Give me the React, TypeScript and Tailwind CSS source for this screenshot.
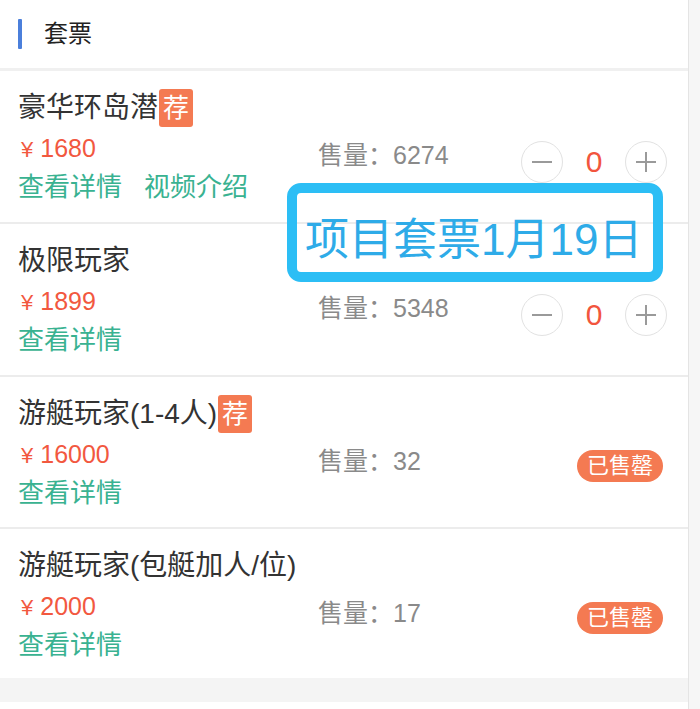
import { useState } from 'react';

type Ticket = {
  name: string;
  hot: boolean;
  price: string;
  sold: number;
  video: boolean;
  soldOut: boolean;
  height: string;
};

const tickets: Ticket[] = [
  { name: '豪华环岛潜', hot: true, price: '1680', sold: 6274, video: true, soldOut: false, height: 'h-[151px]' },
  { name: '极限玩家', hot: false, price: '1899', sold: 5348, video: false, soldOut: false, height: 'h-[151px]' },
  { name: '游艇玩家(1-4人)', hot: true, price: '16000', sold: 32, video: false, soldOut: true, height: 'h-[150px]' },
  { name: '游艇玩家(包艇加人/位)', hot: false, price: '2000', sold: 17, video: false, soldOut: true, height: 'h-[149px]' },
];

function Stepper() {
  const [count, setCount] = useState(0);

  return (
    <div className="flex items-center">
      <button
        onClick={() => setCount(Math.max(0, count - 1))}
        className="w-[42px] h-[42px] rounded-full border border-[#e2e2e2] flex items-center justify-center"
      >
        <svg width="22" height="22" viewBox="0 0 22 22">
          <line x1="1" y1="11" x2="21" y2="11" stroke="#9a9a9a" strokeWidth="2" />
        </svg>
      </button>
      <span className="w-[62px] text-center text-[30px] leading-none text-[#f2553e]">{count}</span>
      <button
        onClick={() => setCount(count + 1)}
        className="w-[42px] h-[42px] rounded-full border border-[#e2e2e2] flex items-center justify-center"
      >
        <svg width="22" height="22" viewBox="0 0 22 22">
          <line x1="1" y1="11" x2="21" y2="11" stroke="#9a9a9a" strokeWidth="2" />
          <line x1="11" y1="1" x2="11" y2="21" stroke="#9a9a9a" strokeWidth="2" />
        </svg>
      </button>
    </div>
  );
}

function TicketRow({ ticket }: { ticket: Ticket }) {
  return (
    <div className={`flex ${ticket.height}`}>
      {/* name, price, links */}
      <div className="w-[318px] pl-[18px] pt-[17px] flex flex-col">
        <div className="flex items-center h-[40px]">
          <span className="text-[28px] text-[#333333] leading-none whitespace-nowrap">{ticket.name}</span>
          {ticket.hot && (
            <span className="ml-[1px] w-[34px] h-[38px] rounded-[3px] bg-[#f47a52] text-white text-[26px] leading-none flex items-center justify-center">
              荐
            </span>
          )}
        </div>
        <div className="flex items-baseline h-[40px] pt-[8px] text-[#f2583f]">
          <span className="text-[22px] leading-none mr-[7px] ml-[3px]">¥</span>
          <span className="text-[25px] leading-none">{ticket.price}</span>
        </div>
        <div className="flex items-center h-[38px] text-[26px] text-[#39b291] leading-none">
          <span>查看详情</span>
          {ticket.video && <span className="ml-[22px]">视频介绍</span>}
        </div>
      </div>

      {/* sales */}
      <div className="flex-1 pt-[66px]">
        <div className="h-[36px] flex items-center text-[25px] text-[#8a8a8a] leading-none">
          售量：{ticket.sold}
        </div>
      </div>

      {/* action */}
      <div className="pr-[21px]">
        {ticket.soldOut ? (
          <div className="mt-[73px] mr-[4px] h-[32px] px-[10px] rounded-full bg-[#f47a52] text-white text-[22px] leading-none flex items-center">
            已售罄
          </div>
        ) : (
          <div className="mt-[70px]">
            <Stepper />
          </div>
        )}
      </div>
    </div>
  );
}

export default function App() {
  return (
    <div
      className="relative w-[700px] h-[709px] bg-white flex overflow-hidden"
      style={{ fontFamily: '"Liberation Sans", "Noto Sans CJK SC", sans-serif' }}
    >
      <div className="w-[688px] flex flex-col">
        {/* Header */}
        <div className="h-[68px] flex items-center">
          <span className="ml-[18px] w-[4px] h-[30px] bg-[#4b7fdb] rounded-[1px]" />
          <span className="ml-[22px] text-[24px] text-[#222222] leading-none">套票</span>
        </div>
        <div className="h-[3px] bg-[#f0f0f0]" />

        {tickets.map((t, i) => (
          <div key={t.name}>
            {i > 0 && <div className="h-[2px] bg-[#ececec]" />}
            <TicketRow ticket={t} />
          </div>
        ))}

        <div className="h-[24px] bg-[#f4f4f4]" />
      </div>

      {/* Right scroll strip */}
      <div className="flex-1 bg-[#f6f6f6] border-l border-[#e4e4e4]" />

      {/* Annotation overlay */}
      <div className="absolute left-[287px] top-[183px] w-[376px] h-[99px] border-[10px] border-[#2cbef5] rounded-[14px] flex items-center pl-[8px] pt-[14px]">
        <span className="text-[44px] leading-none text-[#2eabe8] whitespace-nowrap">项目套票1月19日</span>
      </div>
    </div>
  );
}
